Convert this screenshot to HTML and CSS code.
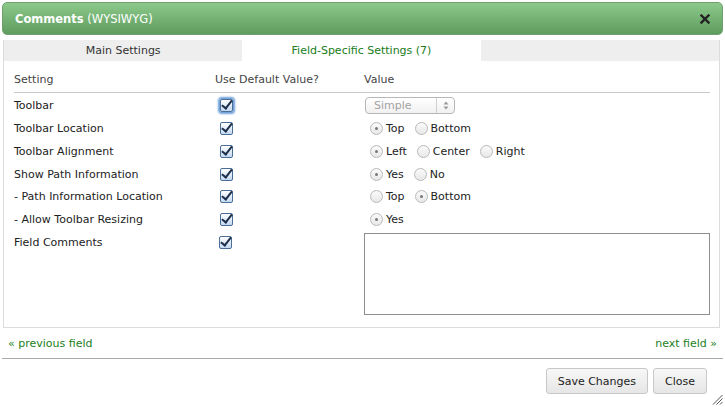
FILE: index.html
```html
<!DOCTYPE html>
<html>
<head>
<meta charset="utf-8">
<link rel="stylesheet" href="styles.css">
</head>
<body>
<div class="dialog">
  <div class="titlebar">
    <span class="title"><b>Comments</b> (WYSIWYG)</span>
    <svg class="close" width="10" height="10" viewBox="0 0 10 10"><path d="M1.5 1.5 L8.5 8.5 M8.5 1.5 L1.5 8.5" stroke="#222" stroke-width="2.4" stroke-linecap="square"/></svg>
  </div>
  <div class="panel">
    <div class="tabs">
      <div class="tab">Main Settings</div>
      <div class="tab active">Field-Specific Settings (7)</div>
      <div class="tab empty"></div>
    </div>
    <div class="settings">
      <div class="row head">
        <div class="c1">Setting</div>
        <div class="c2">Use Default Value?</div>
        <div class="c3">Value</div>
      </div>
      <div class="row first">
        <div class="c1">Toolbar</div>
        <div class="c2"><span class="cb focus"></span></div>
        <div class="c3"><span class="select"><span class="sel-text">Simple</span><span class="sel-arrows"><svg width="6" height="9" viewBox="0 0 6 9"><path d="M3 0.5 L5.5 3.5 H0.5 Z M3 8.5 L5.5 5.5 H0.5 Z" fill="#999"/></svg></span></span></div>
      </div>
      <div class="row">
        <div class="c1">Toolbar Location</div>
        <div class="c2"><span class="cb"></span></div>
        <div class="c3 radios"><span class="rd on"></span><span class="lbl">Top</span><span class="rd"></span><span class="lbl">Bottom</span></div>
      </div>
      <div class="row">
        <div class="c1">Toolbar Alignment</div>
        <div class="c2"><span class="cb"></span></div>
        <div class="c3 radios"><span class="rd on"></span><span class="lbl">Left</span><span class="rd"></span><span class="lbl">Center</span><span class="rd"></span><span class="lbl">Right</span></div>
      </div>
      <div class="row short">
        <div class="c1">Show Path Information</div>
        <div class="c2"><span class="cb"></span></div>
        <div class="c3 radios"><span class="rd on"></span><span class="lbl">Yes</span><span class="rd"></span><span class="lbl">No</span></div>
      </div>
      <div class="row">
        <div class="c1">- Path Information Location</div>
        <div class="c2"><span class="cb"></span></div>
        <div class="c3 radios"><span class="rd"></span><span class="lbl">Top</span><span class="rd on"></span><span class="lbl">Bottom</span></div>
      </div>
      <div class="row">
        <div class="c1">- Allow Toolbar Resizing</div>
        <div class="c2"><span class="cb"></span></div>
        <div class="c3 radios"><span class="rd on"></span><span class="lbl">Yes</span></div>
      </div>
      <div class="row tall">
        <div class="c1">Field Comments</div>
        <div class="c2"><span class="cb"></span></div>
        <div class="c3"><div class="textarea"></div></div>
      </div>
    </div>
  </div>
  <div class="nav">
    <a class="link">« previous field</a>
    <a class="link">next field »</a>
  </div>
  <div class="footer">
    <button class="btn">Save Changes</button>
    <button class="btn">Close</button>
  </div>
  <svg class="grip" width="11" height="11" viewBox="0 0 11 11"><path d="M10.5 1 L1 10.5 M10.5 4.5 L4.5 10.5 M10.5 8 L8 10.5" stroke="#555" stroke-width="1"/></svg>
</div>
</body>
</html>
```
FILE: styles.css
```css
html, body {
  margin: 0;
  padding: 0;
  background: #fff;
}
body {
  font-family: "DejaVu Sans", Verdana, sans-serif;
  font-size: 11px;
  color: #222;
}
.dialog {
  position: relative;
  width: 725px;
  height: 407px;
  box-sizing: border-box;
  padding: 2px 2px 0 2px;
}
.titlebar {
  height: 33px;
  box-sizing: border-box;
  border: 1px solid #6f9f6f;
  border-radius: 5px;
  background: linear-gradient(#8cc98b, #5e9c5e);
  display: flex;
  align-items: center;
  justify-content: space-between;
  padding: 0 12px 0 12px;
  color: #fff;
}
.title {
  font-size: 11.5px;
}
.title b {
  font-weight: bold;
}
.close {
  display: block;
}
.panel {
  margin: 5px 3px 0 1px;
  border: 1px solid #dcdcdc;
  border-top: none;
  height: 288px;
  box-sizing: border-box;
}
.tabs {
  display: flex;
  height: 21px;
  background: #eee;
}
.tab {
  flex: 1;
  display: flex;
  align-items: center;
  justify-content: center;
  color: #333;
}
.tab.active {
  background: #fff;
  color: #187c18;
}
.settings {
  padding: 12px 9px 0 10px;
}
.row {
  display: flex;
  align-items: center;
  height: 23px;
}
.row.first {
  height: 24px;
  padding-top: 1px;
  box-sizing: border-box;
}
.row.short {
  height: 22px;
}
.row.head {
  height: 19px;
  align-items: flex-start;
  border-bottom: 1px solid #c8c8c8;
  color: #444;
}
.row.tall {
  align-items: flex-start;
  height: auto;
  padding-top: 2px;
}
.row.tall .c1, .row.tall .c2 {
  padding-top: 3px;
}
.c1 {
  width: 201px;
}
.c2 {
  width: 149px;
  display: flex;
  align-items: center;
}
.c3 {
  flex: 1;
  display: flex;
  align-items: center;
}
.cb {
  display: inline-block;
  width: 11px;
  height: 11px;
  margin-left: 5px;
  border: 1px solid #4b6e96;
  border-radius: 2px;
  background: linear-gradient(#ffffff, #c4d9f2);
  position: relative;
}
.cb::after {
  content: "";
  position: absolute;
  left: 3px;
  top: -2px;
  width: 4px;
  height: 9px;
  border-right: 2px solid #1c2f4a;
  border-bottom: 2px solid #1c2f4a;
  transform: rotate(38deg);
  transform-origin: 50% 50%;
}
.cb.focus {
  box-shadow: 0 0 2px 2px #6d9fd9;
}
.select {
  display: inline-flex;
  align-items: center;
  margin-left: 1px;
  width: 90px;
  height: 17px;
  box-sizing: border-box;
  border: 1px solid #b7b7b7;
  border-radius: 4px;
  background: linear-gradient(#fff, #f1f1f1);
  color: #a3a3a3;
}
.sel-text {
  flex: 1;
  padding-left: 8px;
}
.sel-arrows {
  width: 17px;
  height: 100%;
  border-left: 1px solid #cfcfcf;
  display: flex;
  align-items: center;
  justify-content: center;
}
.radios .rd {
  display: inline-block;
  width: 11px;
  height: 11px;
  border: 1px solid #b9b9b9;
  border-radius: 50%;
  background: linear-gradient(#fafafa, #e8e8e8);
  position: relative;
  margin-left: 6px;
  margin-right: 3px;
}
.radios .lbl + .rd {
  margin-left: 10px;
}
.rd.on::after {
  content: "";
  position: absolute;
  left: 4px;
  top: 4px;
  width: 3px;
  height: 3px;
  border-radius: 50%;
  background: #777;
}
.textarea {
  margin-left: 1px;
  width: 346px;
  height: 82px;
  box-sizing: border-box;
  border: 1px solid #8e8e8e;
}
.nav {
  display: flex;
  justify-content: space-between;
  align-items: center;
  height: 30px;
  padding: 0 6px 0 6px;
  border-bottom: 1px solid #aaa;
}
.link {
  color: #1b7f1b;
  text-decoration: none;
}
.footer {
  display: flex;
  justify-content: flex-end;
  gap: 5px;
  padding: 9px 16px 0 0;
}
.btn {
  font-family: "DejaVu Sans", Verdana, sans-serif;
  font-size: 11px;
  color: #222;
  height: 26px;
  padding: 0 11px;
  border: 1px solid #c8c8c8;
  border-radius: 3px;
  background: linear-gradient(#f7f7f7, #e6e6e6);
}
.grip {
  position: absolute;
  right: 2px;
  bottom: 2px;
}
```
